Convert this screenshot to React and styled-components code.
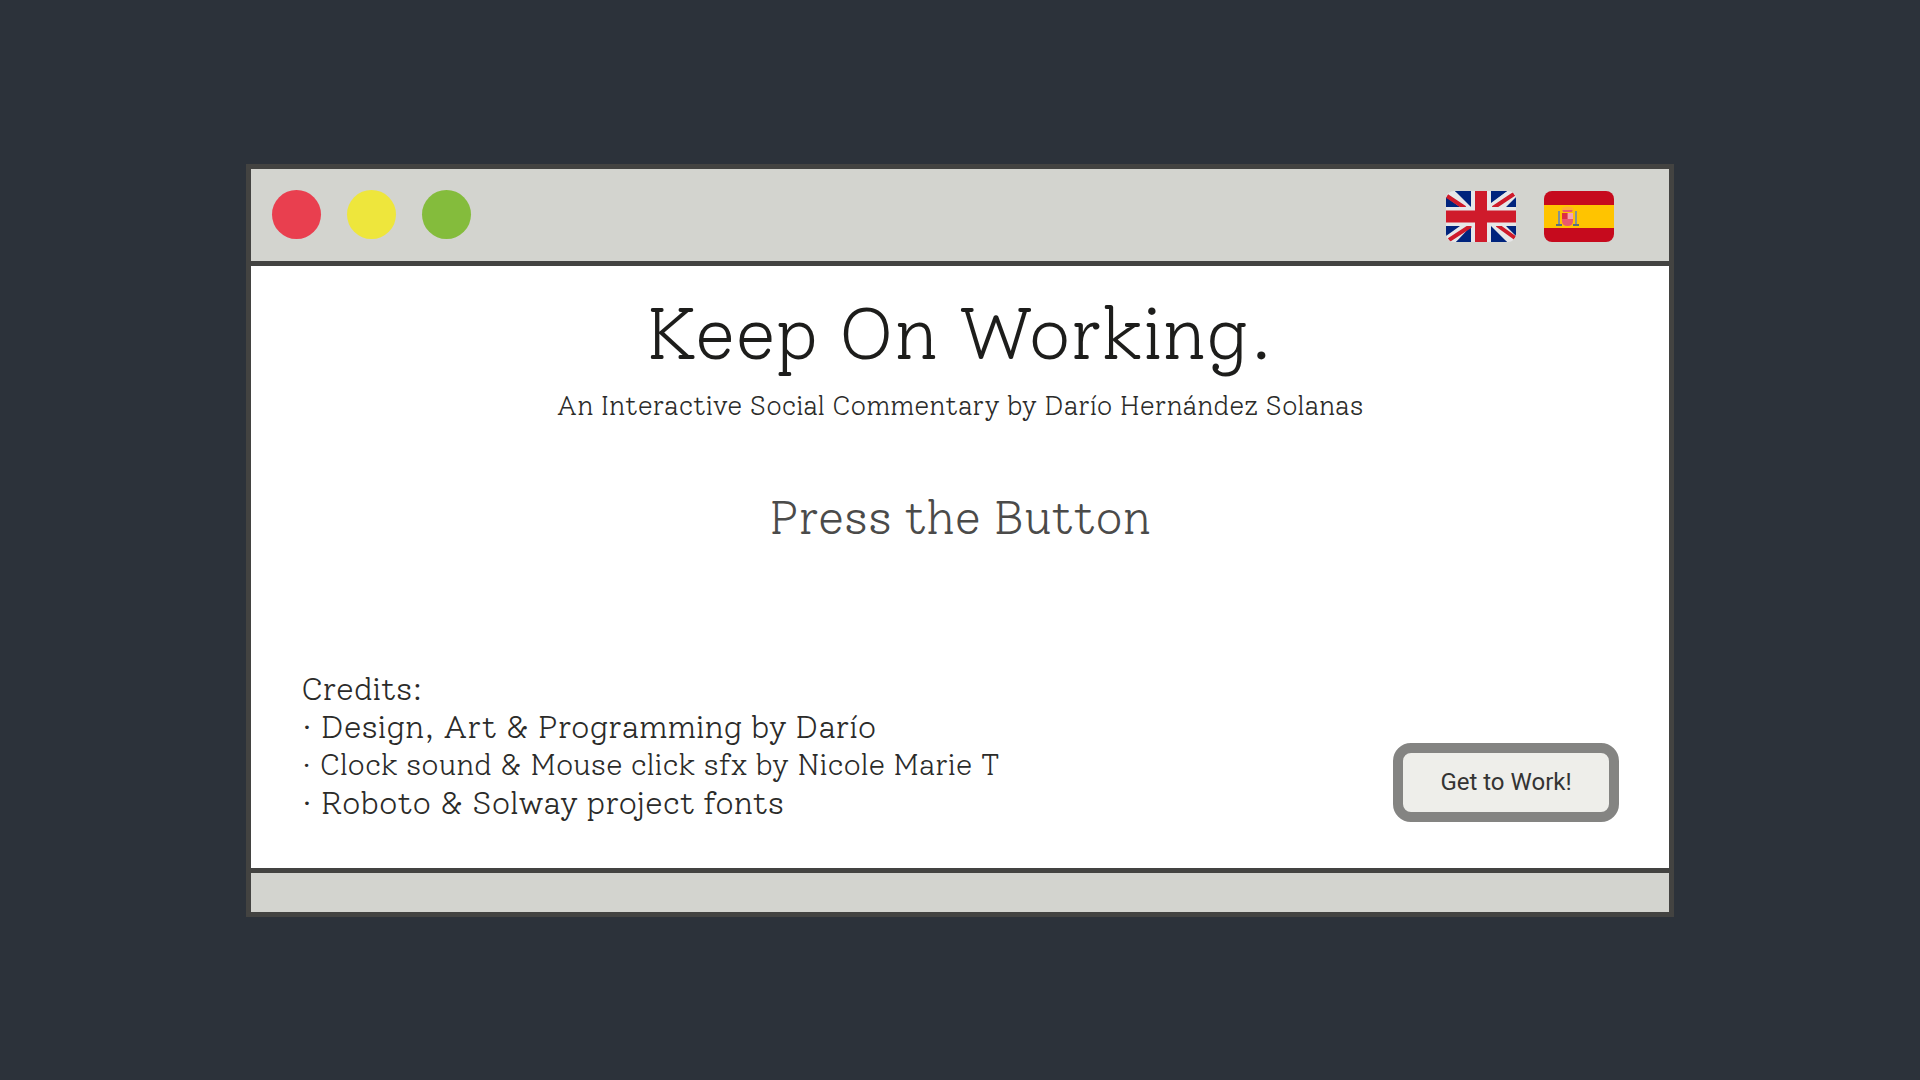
import React from "react";
import styled, { createGlobalStyle } from "styled-components";

const GlobalStyle = createGlobalStyle`
  *, *::before, *::after { box-sizing: border-box; }
  body { margin: 0; background: #2c323a; }
  h1, p, ul { margin: 0; padding: 0; font-weight: 300; }
`;

const slab = `"Solway", "DejaVu Serif Condensed", "DejaVu Serif", serif`;
const line = "#434341";
const chrome = "#d3d4cf";

const Desktop = styled.div`
  min-height: 100vh;
  display: flex;
  align-items: center;
  justify-content: center;
  padding: 24px;
  background: #2c323a;
  font-family: ${slab};
  font-weight: 300;
  color: #2b2b29;
`;

const Window = styled.section`
  width: 100%;
  max-width: 1428px;
  display: flex;
  flex-direction: column;
  border: 5px solid ${line};
  background: #fff;
`;

const TitleBar = styled.header`
  display: flex;
  align-items: center;
  justify-content: space-between;
  min-height: 97px;
  padding: 0 55px 0 21px;
  border-bottom: 5px solid ${line};
  background: ${chrome};
`;

const Lights = styled.div`
  display: flex;
  gap: 26px;
`;

const Light = styled.button`
  width: 49px;
  height: 49px;
  padding: 0;
  border: 0;
  border-radius: 50%;
  background: ${(p) => p.$color};
  cursor: pointer;
`;

const Languages = styled.nav`
  display: flex;
  gap: 28px;
  padding-top: 4px;
`;

const FlagButton = styled.button`
  display: block;
  width: 70px;
  height: 51px;
  padding: 0;
  border: 0;
  border-radius: 8px;
  overflow: hidden;
  background: none;
  cursor: pointer;

  svg { display: block; width: 100%; height: 100%; }
`;

const Body = styled.main`
  display: flex;
  flex-direction: column;
  flex: 1;
  padding: 24px 50px 46px;
`;

const Intro = styled.div`
  display: flex;
  flex-direction: column;
  align-items: center;
  text-align: center;
`;

const Title = styled.h1`
  font-size: 73px;
  line-height: 88px;
  color: #1d1d1b;
`;

const Subtitle = styled.p`
  margin-top: 10px;
  font-size: 27px;
  line-height: 36px;
`;

const Prompt = styled.p`
  margin-top: 64px;
  font-size: 47px;
  line-height: 60px;
  color: #4b4b4a;
`;

const Bottom = styled.div`
  display: flex;
  align-items: flex-end;
  justify-content: space-between;
  gap: 40px;
  margin-top: 122px;
`;

const Credits = styled.div`
  font-size: 32px;
  line-height: 38px;

  ul { list-style: none; }
`;

const Credit = styled.li`
  font-size: ${(p) => (p.$compact ? 30 : 32)}px;
`;

const WorkButton = styled.button`
  min-width: 226px;
  height: 79px;
  flex-shrink: 0;
  border: 10px solid #848482;
  border-radius: 18px;
  background: #eeeeea;
  font-family: Roboto, sans-serif;
  font-size: 24px;
  line-height: 28px;
  color: #343433;
  cursor: pointer;
`;

const StatusBar = styled.footer`
  height: 44px;
  border-top: 5px solid ${line};
  background: ${chrome};
`;

const FlagUK = () => (
  <svg viewBox="0 0 70 51" aria-hidden="true">
    <rect width="70" height="51" fill="#e6e7e8" />
    <path d="M9 0H25V16ZM45 0H61L45 11ZM0 6L14 16H0ZM70 6V16H60ZM0 35H14L0 45ZM25 35V51H10ZM45 35L61 51H45ZM60 35H70V45Z" fill="#00247d" />
    <path d="M9 0H25V12ZM45 0H61L45 12ZM10 51H25V40ZM45 51H61L45 40Z" fill="#00247d" />
    <path d="M1 5L19 17M68 3L47 17M3 49L26 34M69 47L51 34" stroke="#cf1b2b" strokeWidth="4" />
    <path d="M35 0V51M0 25.500H70" stroke="#e6e7e8" strokeWidth="19" />
    <path d="M35 0V51M0 25.500H70" stroke="#cf1b2b" strokeWidth="12" />
  </svg>
);

const FlagSpain = () => (
  <svg viewBox="0 0 70 51" aria-hidden="true">
    <rect width="70" height="51" fill="#c60a1d" />
    <rect y="14" width="70" height="23" fill="#ffc400" />
    <path d="M14 20h2v13h-2zM31 20h2v13h-2z" fill="#829296" />
    <path d="M12 33h6v2h-6zM29 33h6v2h-6z" fill="#5c7078" />
    <path d="M18 22h11v8q0 5-5.500 5T18 30z" fill="#ea596e" />
    <path d="M18 18h11l-1 3h-9z" fill="#ea596e" />
    <path d="M18 17q5.500-3 11 0v2H18z" fill="#ffac33" />
    <rect x="18" y="22" width="5" height="6" fill="#dd2e44" />
    <rect x="24" y="22" width="5" height="6" fill="#f4a2b2" />
  </svg>
);

const lights = [
  { name: "Close", color: "#e93f4f" },
  { name: "Minimize", color: "#eee63c" },
  { name: "Maximize", color: "#84bc3c" },
];

const credits = [
  { text: "· Design, Art & Programming by Darío" },
  { text: "· Clock sound & Mouse click sfx by Nicole Marie T", compact: true },
  { text: "· Roboto & Solway project fonts" },
];

export default function App() {
  return (
    <>
      <GlobalStyle />
      <Desktop>
        <Window>
          <TitleBar>
            <Lights>
              {lights.map((l) => (
                <Light key={l.name} type="button" aria-label={l.name} $color={l.color} />
              ))}
            </Lights>
            <Languages aria-label="Language">
              <FlagButton type="button" aria-label="English"><FlagUK /></FlagButton>
              <FlagButton type="button" aria-label="Español"><FlagSpain /></FlagButton>
            </Languages>
          </TitleBar>
          <Body>
            <Intro>
              <Title>Keep On Working.</Title>
              <Subtitle>An Interactive Social Commentary by Darío Hernández Solanas</Subtitle>
              <Prompt>Press the Button</Prompt>
            </Intro>
            <Bottom>
              <Credits>
                <p>Credits:</p>
                <ul>
                  {credits.map((c) => (
                    <Credit key={c.text} $compact={c.compact}>{c.text}</Credit>
                  ))}
                </ul>
              </Credits>
              <WorkButton type="button">Get to Work!</WorkButton>
            </Bottom>
          </Body>
          <StatusBar />
        </Window>
      </Desktop>
    </>
  );
}
